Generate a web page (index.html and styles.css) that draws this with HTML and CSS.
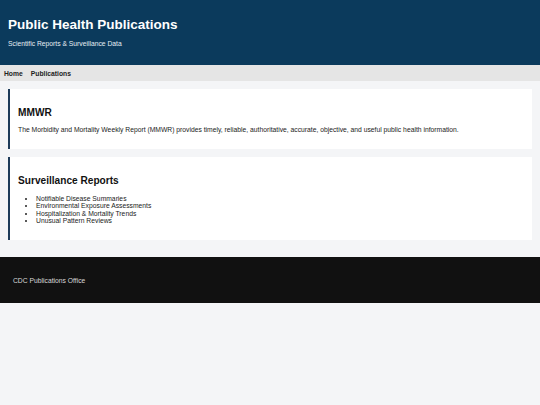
FILE: index.html
```html
<!DOCTYPE html>
<html lang="en">
<head>
<meta charset="utf-8">
<title>Public Health Publications</title>
<link rel="stylesheet" href="styles.css">
</head>
<body>
<header class="site-header">
  <h1 class="site-title">Public Health Publications</h1>
  <p class="site-subtitle">Scientific Reports &amp; Surveillance Data</p>
</header>
<nav class="site-nav">
  <a class="nav-link" href="#">Home</a>
  <a class="nav-link" href="#">Publications</a>
</nav>
<main class="content">
  <section class="card">
    <h2 class="card-title">MMWR</h2>
    <p class="card-text">The Morbidity and Mortality Weekly Report (MMWR) provides timely, reliable, authoritative, accurate, objective, and useful public health information.</p>
  </section>
  <section class="card">
    <h2 class="card-title">Surveillance Reports</h2>
    <ul class="card-list">
      <li>Notifiable Disease Summaries</li>
      <li>Environmental Exposure Assessments</li>
      <li>Hospitalization &amp; Mortality Trends</li>
      <li>Unusual Pattern Reviews</li>
    </ul>
  </section>
</main>
<footer class="site-footer">
  <p class="footer-text">CDC Publications Office</p>
</footer>
</body>
</html>
```

FILE: styles.css
```css
html, body {
  margin: 0;
  padding: 0;
}
body {
  background: #f4f5f7;
  font-family: "Liberation Sans", Arial, sans-serif;
  color: #111;
}
.site-header {
  background: #0b3a5c;
  color: #fff;
  height: 65px;
  box-sizing: border-box;
  padding: 16.5px 8px 0 8px;
}
.site-title {
  margin: 0 0 8.4px 0;
  font-size: 13.5px;
  line-height: 15.5px;
  font-weight: bold;
}
.site-subtitle {
  margin: 0;
  font-size: 6.75px;
  line-height: 7.8px;
  color: #e6edf3;
}
.site-nav {
  background: #e5e5e5;
  height: 16px;
  display: flex;
  align-items: center;
  gap: 8px;
  padding: 0 4px;
}
.nav-link {
  font-size: 6.75px;
  font-weight: bold;
  color: #222;
  text-decoration: none;
}
.content {
  display: flex;
  flex-direction: column;
  gap: 8px;
  padding: 8px 8px 17px 8px;
}
.card {
  background: #fff;
  border-left: 2.7px solid #1d3b59;
  padding: 17.5px 8px 15.4px 8.1px;
}
.card-title {
  margin: 0 0 8.1px 0;
  font-size: 10.125px;
  line-height: 11.6px;
  font-weight: bold;
  color: #111;
}
.card-text {
  margin: 0;
  font-size: 6.75px;
  line-height: 7.8px;
  color: #222;
}
.card-list {
  margin: 0;
  padding-left: 18px;
  font-size: 6.75px;
  line-height: 7.6px;
  color: #222;
}
.site-footer {
  background: #111;
  height: 46px;
  display: flex;
  align-items: center;
  padding: 0 13px;
}
.footer-text {
  margin: 0;
  font-size: 6.75px;
  color: #d8d8d8;
}
```
